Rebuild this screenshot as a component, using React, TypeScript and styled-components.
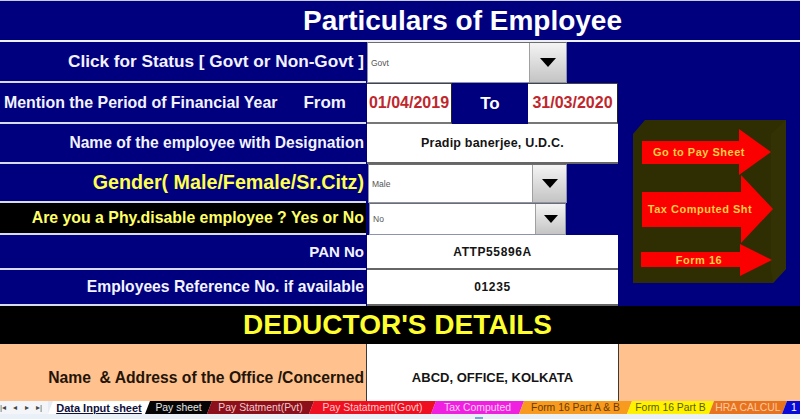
import styled, { createGlobalStyle } from "styled-components";

const navy = "#00007f";
const peach = "#ffc28f";

const GlobalStyle = createGlobalStyle`
  html, body {
    margin: 0;
    padding: 0;
    background: ${navy};
  }
  body {
    width: 800px;
    height: 419px;
    overflow: hidden;
    font-family: "Liberation Sans", Arial, sans-serif;
  }
`;

const tabs = [
  { label: "Data Input sheet", bg: "#ffffff", color: "#10103a", width: 102, active: true },
  { label: "Pay sheet", bg: "#050505", color: "#e6e6e6", width: 67 },
  { label: "Pay Statment(Pvt)", bg: "#8c0f1c", color: "#f2c9c9", width: 107 },
  { label: "Pay Statatment(Govt)", bg: "#ee1020", color: "#ffc9c9", width: 127 },
  { label: "Tax Computed", bg: "#f020e0", color: "#ffd0f5", width: 93 },
  { label: "Form 16 Part A & B", bg: "#f79a1e", color: "#6a3a00", width: 113 },
  { label: "Form 16 Part B", bg: "#fff200", color: "#5c5c00", width: 87 },
  { label: "HRA CALCUL", bg: "#e8731f", color: "#ffc9a0", width: 78 },
  { label: "1", bg: "#0a0ad8", color: "#ffffff", width: 24 },
];

type DropdownProps = { value: string; inset: number; width: number; button: number; caret: number };

const Dropdown = ({ value, inset, width, button, caret }: DropdownProps) => (
  <SelectCell $inset={inset} $width={width}>
    <SelectText>{value}</SelectText>
    <SelectButton $width={button}>
      <Caret $size={caret} />
    </SelectButton>
  </SelectCell>
);

const ArrowPanel = () => (
  <Panel>
    <svg width="154" height="164" viewBox="0 0 154 164">
      <polygon points="12,0 153,0 153,149 140,163 0,163 0,14" fill="#2e2e02" />
      <polygon points="153,0 153,149 140,163 138,150 138,14" fill="#323205" />
      <polygon points="9,21 106,21 106,9 138,32 106,55 106,44 9,44" fill="#fb0000" />
      <polygon points="9,72 108,72 108,55 140,89 108,123 108,107 9,107" fill="#fb0000" />
      <polygon points="8,132 107,132 107,124 139,140 107,156 107,147 8,147" fill="#fb0000" />
      <ArrowLabel x="66" y="36">Go to Pay Sheet</ArrowLabel>
      <ArrowLabel x="67" y="93">Tax Computed Sht</ArrowLabel>
      <ArrowLabel x="66" y="144">Form 16</ArrowLabel>
    </svg>
  </Panel>
);

export default function App() {
  return (
    <>
      <GlobalStyle />
      <Page>
        <TopEdge />
        <Title>Particulars of Employee</Title>
        <Sheet>
          <Row $height={41}>
            <Label $size={17.2}>Click for Status [ Govt or Non-Govt ]</Label>
            <Dropdown value="Govt" inset={1} width={200} button={36} caret={16} />
          </Row>
          <Row $height={41}>
            <PeriodLabel>
              <span>Mention the Period of Financial Year</span>
              <From>From</From>
            </PeriodLabel>
            <DateRange>
              <DateCell $width={85}>01/04/2019</DateCell>
              <ToCell>To</ToCell>
              <DateCell $width={90}>31/03/2020</DateCell>
            </DateRange>
          </Row>
          <Row $height={40}>
            <Label $size={15.6}>Name of the employee with Designation</Label>
            <ValueCell $size={12.5}>Pradip banerjee, U.D.C.</ValueCell>
          </Row>
          <Row $height={39}>
            <Label $color="#ffff4d" $size={19.7}>Gender( Male/Female/Sr.Citz)</Label>
            <Dropdown value="Male" inset={2} width={199} button={33} caret={16} />
          </Row>
          <Row $height={32}>
            <Label $color="#ffff66" $bg="#000000" $size={15.85}>Are you a Phy.disable employee ? Yes or No</Label>
            <Dropdown value="No" inset={3} width={197} button={29} caret={14} />
          </Row>
          <Row $height={35}>
            <Label $size={15}>PAN No</Label>
            <ValueCell $spaced>ATTP55896A</ValueCell>
          </Row>
          <Row $height={36}>
            <Label $size={15.7}>Employees Reference No. if available</Label>
            <ValueCell $spaced>01235</ValueCell>
          </Row>
        </Sheet>
        <Banner>DEDUCTOR'S DETAILS</Banner>
        <OfficeRow>
          <OfficeLabel>Name &nbsp;&amp; Address of the Office /Concerned</OfficeLabel>
          <OfficeValue>ABCD, OFFICE, KOLKATA</OfficeValue>
        </OfficeRow>
        <TabBar>
          <TabNav>
            <NavGlyph>|◂</NavGlyph>
            <NavGlyph>◂</NavGlyph>
            <NavGlyph>▸</NavGlyph>
            <NavGlyph>▸|</NavGlyph>
          </TabNav>
          {tabs.map((tab) => (
            <Tab key={tab.label} $bg={tab.bg} $color={tab.color} $width={tab.width} $active={tab.active}>
              {tab.label}
            </Tab>
          ))}
        </TabBar>
        <StatusStrip />
        <ArrowPanel />
      </Page>
    </>
  );
}

const Page = styled.div`
  position: relative;
  width: 800px;
  height: 419px;
  display: flex;
  flex-direction: column;
  background: ${navy};
  overflow: hidden;
`;

const TopEdge = styled.div`
  height: 1px;
  background: #c8cbe6;
`;

const Title = styled.h1`
  margin: 0;
  height: 39px;
  padding-left: 303px;
  line-height: 39px;
  font-size: 28px;
  font-weight: 700;
  color: #ffffff;
  border-bottom: 2px solid #eef0fa;
`;

const Sheet = styled.div`
  display: flex;
  flex-direction: column;
`;

const Row = styled.div<{ $height: number }>`
  display: flex;
  height: ${(p) => p.$height}px;
`;

const Label = styled.div<{ $color?: string; $size?: number; $bg?: string }>`
  width: 366px;
  flex-shrink: 0;
  box-sizing: border-box;
  display: flex;
  align-items: center;
  justify-content: flex-end;
  padding-right: 2px;
  font-size: ${(p) => p.$size ?? 16}px;
  font-weight: 700;
  white-space: nowrap;
  color: ${(p) => p.$color ?? "#f2f3ff"};
  background: ${(p) => p.$bg ?? navy};
  border-bottom: 2px solid #d8dbee;
`;

const PeriodLabel = styled(Label)`
  justify-content: flex-start;
  padding-left: 4px;
  font-size: 15.9px;
`;

const From = styled.span`
  margin-left: 26px;
  font-size: 17px;
`;

const SelectCell = styled.div<{ $inset: number; $width: number }>`
  width: ${(p) => p.$width}px;
  margin-left: ${(p) => p.$inset}px;
  box-sizing: border-box;
  display: flex;
  align-items: stretch;
  background: #ffffff;
  border: 1px solid #8d93a8;
  border-top-color: #6d6d6d;
`;

const SelectText = styled.div`
  flex: 1;
  display: flex;
  align-items: center;
  padding-left: 3px;
  font-size: 8.5px;
  color: #555555;
`;

const SelectButton = styled.div<{ $width: number }>`
  width: ${(p) => p.$width}px;
  display: flex;
  align-items: center;
  justify-content: center;
  background: linear-gradient(#f4f4f4, #c4c4c4);
  border-left: 1px solid #a0a0a0;
`;

const Caret = styled.div<{ $size: number }>`
  width: 0;
  height: 0;
  border-left: ${(p) => p.$size / 2}px solid transparent;
  border-right: ${(p) => p.$size / 2}px solid transparent;
  border-top: ${(p) => p.$size / 2 + 1}px solid #000000;
`;

const DateRange = styled.div`
  display: flex;
  margin-left: 1px;
  width: 251px;
  background: ${navy};
`;

const DateCell = styled.div<{ $width: number }>`
  width: ${(p) => p.$width}px;
  box-sizing: border-box;
  display: flex;
  align-items: center;
  justify-content: center;
  background: #ffffff;
  color: #c0272d;
  font-size: 16px;
  font-weight: 700;
  border-top: 1px solid #444444;
  border-bottom: 2px solid #777777;
  border-right: 1px solid #222222;
`;

const ToCell = styled.div`
  width: 76px;
  display: flex;
  align-items: center;
  justify-content: center;
  color: #ffffff;
  font-size: 17px;
  font-weight: 700;
`;

const ValueCell = styled.div<{ $spaced?: boolean; $size?: number }>`
  width: 251px;
  margin-left: 1px;
  box-sizing: border-box;
  display: flex;
  align-items: center;
  justify-content: center;
  background: #ffffff;
  color: #141414;
  font-size: ${(p) => p.$size ?? 12}px;
  font-weight: 700;
  letter-spacing: ${(p) => (p.$spaced ? "0.6px" : "0.2px")};
  border-bottom: 2px solid #666666;
`;

const Banner = styled.h2`
  margin: 0;
  height: 38px;
  padding-left: 243px;
  line-height: 38px;
  font-size: 28px;
  font-weight: 700;
  color: #ffff2e;
  background: #000000;
`;

const OfficeRow = styled.div`
  display: flex;
  height: 57px;
  background: ${peach};
`;

const OfficeLabel = styled.div`
  width: 366px;
  box-sizing: border-box;
  display: flex;
  align-items: center;
  justify-content: flex-end;
  padding: 10px 2px 0 0;
  font-size: 15.7px;
  font-weight: 700;
  white-space: pre;
  color: #241408;
`;

const OfficeValue = styled.div`
  width: 253px;
  box-sizing: border-box;
  display: flex;
  align-items: center;
  justify-content: center;
  padding-top: 10px;
  background: #ffffff;
  color: #141414;
  font-size: 13px;
  font-weight: 700;
  border-left: 1px solid #3a3a3a;
  border-right: 1px solid #3a3a3a;
`;

const TabBar = styled.div`
  display: flex;
  height: 13px;
  background: #e6ecf4;
  overflow: hidden;
`;

const TabNav = styled.div`
  width: 48px;
  flex-shrink: 0;
  display: flex;
  align-items: center;
  justify-content: space-between;
  padding-right: 6px;
  box-sizing: border-box;
  background: #f3f5f8;
`;

const NavGlyph = styled.span`
  font-size: 8px;
  line-height: 13px;
  color: #444444;
`;

const Tab = styled.div<{ $bg: string; $color: string; $width: number; $active?: boolean }>`
  width: ${(p) => p.$width}px;
  flex-shrink: 0;
  margin-right: -5px;
  display: flex;
  align-items: center;
  justify-content: center;
  background: ${(p) => p.$bg};
  color: ${(p) => p.$color};
  font-size: ${(p) => (p.$active ? 11 : 10.4)}px;
  font-weight: ${(p) => (p.$active ? 700 : 400)};
  text-decoration: ${(p) => (p.$active ? "underline" : "none")};
  white-space: nowrap;
  clip-path: polygon(5px 0, 100% 0, calc(100% - 5px) 100%, 0 100%);
`;

const StatusStrip = styled.div`
  position: relative;
  flex: 1;
  background: #e9f0f8;

  &::after {
    content: "";
    position: absolute;
    left: 475px;
    bottom: 0;
    width: 8px;
    height: 2px;
    background: #6fa8dc;
  }
`;

const Panel = styled.div`
  position: absolute;
  left: 633px;
  top: 120px;
  width: 154px;
  height: 164px;
`;

const ArrowLabel = styled.text`
  font-family: "Liberation Sans", Arial, sans-serif;
  font-size: 11px;
  font-weight: 700;
  letter-spacing: 0.5px;
  fill: #ffcc44;
  text-anchor: middle;
`;
